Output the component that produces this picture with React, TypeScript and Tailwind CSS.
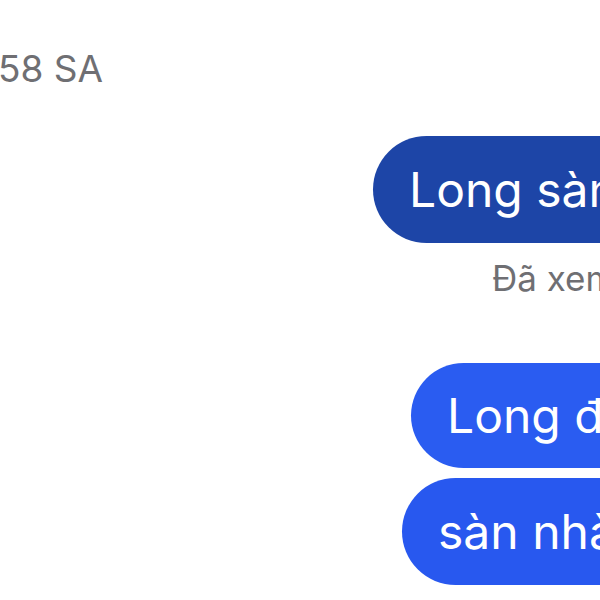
export default function App() {
  return (
    <div className="w-[600px] h-[600px] overflow-hidden bg-white font-['Inter',sans-serif]">
      <div className="pt-[50px] pl-0">
        {/* timestamp, cropped on the left */}
        <div className="text-[37px] leading-none text-[#6f6f73] whitespace-nowrap -ml-[2px]">58 SA</div>

        <div className="mt-[49px] flex pl-[373px]">
          <div className="h-[107px] shrink-0 flex items-center rounded-full bg-[#1d45a7] pl-[36px] pr-[60px] text-white text-[48px] leading-none whitespace-nowrap">
            Long sàn nhà
          </div>
        </div>

        <div className="mt-[18px] pl-[492px] text-[35px] leading-none text-[#6f6f73] whitespace-nowrap">Đã xem</div>

        <div className="mt-[67px] flex flex-col gap-[10px]">
          <div className="flex pl-[411px]">
            <div className="h-[105px] shrink-0 flex items-center rounded-full bg-[#2a5cf1] pl-[36px] pr-[60px] text-white text-[48px] leading-none whitespace-nowrap">
              Long đã lau
            </div>
          </div>
          <div className="flex pl-[402px]">
            <div className="h-[107px] shrink-0 flex items-center rounded-full bg-[#2858ef] pl-[36px] pr-[60px] text-white text-[48px] leading-none whitespace-nowrap">
              sàn nhà rồi
            </div>
          </div>
        </div>
      </div>
    </div>
  );
}
